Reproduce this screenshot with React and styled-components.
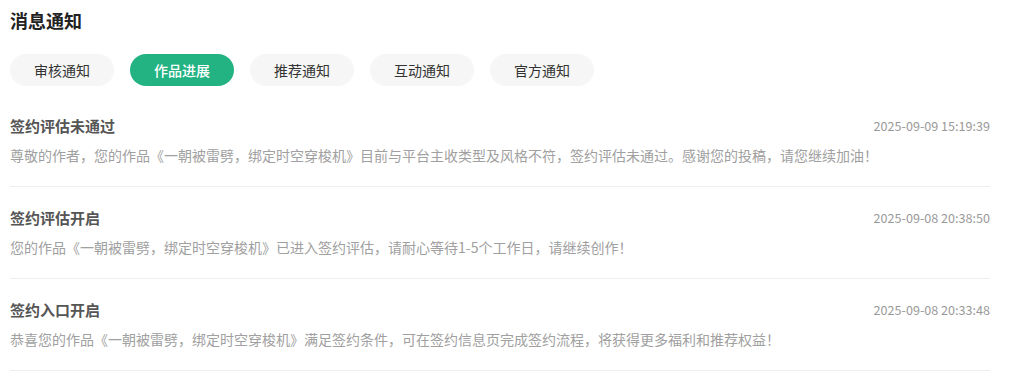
import React, { useState } from 'react';
import styled, { createGlobalStyle } from 'styled-components';

const GlobalStyle = createGlobalStyle`
  body {
    margin: 0;
    background: #ffffff;
    font-family: "Noto Sans CJK SC", "Noto Sans", sans-serif;
  }
`;

const Page = styled.div`
  padding: 8px 24px 0 10px;
  width: 980px;
`;

const Title = styled.h1`
  margin: 0;
  font-size: 18px;
  line-height: 24px;
  font-weight: 700;
  color: #222222;
`;

const Tabs = styled.div`
  display: flex;
  gap: 16px;
  margin-top: 22px;
`;

const Tab = styled.button`
  width: 104px;
  height: 32px;
  border: none;
  border-radius: 16px;
  padding: 0;
  font-family: inherit;
  font-size: 14px;
  cursor: pointer;
  background: ${(p) => (p.$active ? '#23b383' : '#f6f6f6')};
  color: ${(p) => (p.$active ? '#ffffff' : '#333333')};
  font-weight: ${(p) => (p.$active ? 500 : 400)};
`;

const List = styled.div`
  margin-top: 9px;
`;

const Item = styled.div`
  padding: 19px 0 21px;
  border-bottom: 1px solid #eeeeee;
`;

const ItemHead = styled.div`
  display: flex;
  justify-content: space-between;
  align-items: center;
  height: 22px;
`;

const ItemTitle = styled.div`
  font-size: 15px;
  font-weight: 700;
  color: #555555;
`;

const ItemTime = styled.div`
  font-size: 12.6px;
  color: #999999;
`;

const ItemText = styled.div`
  margin-top: 9px;
  font-size: 14px;
  line-height: 20px;
  color: #a0a0a0;
`;

const tabs = ['审核通知', '作品进展', '推荐通知', '互动通知', '官方通知'];

const notices = [
  {
    title: '签约评估未通过',
    time: '2025-09-09 15:19:39',
    text: '尊敬的作者，您的作品《一朝被雷劈，绑定时空穿梭机》目前与平台主收类型及风格不符，签约评估未通过。感谢您的投稿，请您继续加油！',
  },
  {
    title: '签约评估开启',
    time: '2025-09-08 20:38:50',
    text: '您的作品《一朝被雷劈，绑定时空穿梭机》已进入签约评估，请耐心等待1-5个工作日，请继续创作！',
  },
  {
    title: '签约入口开启',
    time: '2025-09-08 20:33:48',
    text: '恭喜您的作品《一朝被雷劈，绑定时空穿梭机》满足签约条件，可在签约信息页完成签约流程，将获得更多福利和推荐权益！',
  },
];

export default function App() {
  const [active, setActive] = useState(1);

  return (
    <Page>
      <GlobalStyle />
      <Title>消息通知</Title>
      <Tabs>
        {tabs.map((t, i) => (
          <Tab key={t} $active={i === active} onClick={() => setActive(i)}>
            {t}
          </Tab>
        ))}
      </Tabs>
      <List>
        {notices.map((n) => (
          <Item key={n.time}>
            <ItemHead>
              <ItemTitle>{n.title}</ItemTitle>
              <ItemTime>{n.time}</ItemTime>
            </ItemHead>
            <ItemText>{n.text}</ItemText>
          </Item>
        ))}
      </List>
    </Page>
  );
}
